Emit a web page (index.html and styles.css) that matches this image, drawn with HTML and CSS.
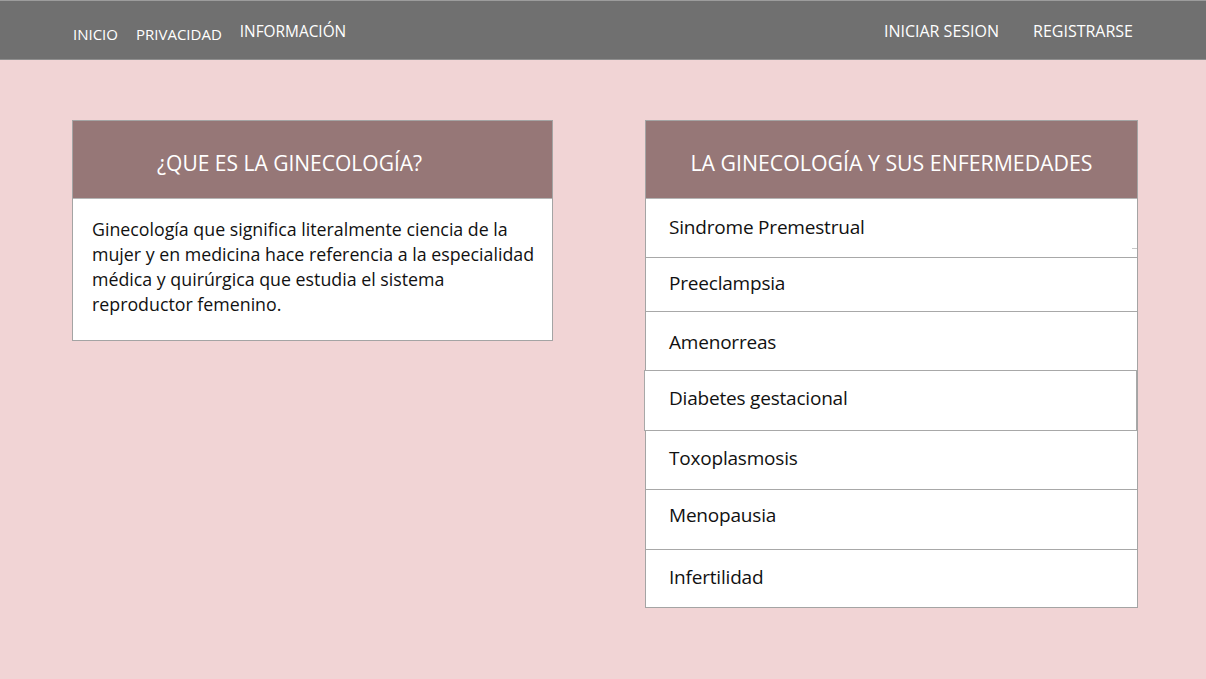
FILE: index.html
```html
<!DOCTYPE html>
<html lang="es">
<head>
<meta charset="utf-8">
<title>Ginecología</title>
<link rel="stylesheet" href="styles.css">
</head>
<body>
<header class="topbar">
  <nav class="nav-left">
    <a class="nav-link" href="#">INICIO</a>
    <a class="nav-link" href="#">PRIVACIDAD</a>
    <a class="nav-link raised" href="#">INFORMACIÓN</a>
  </nav>
  <nav class="nav-right">
    <a class="nav-link raised" href="#">INICIAR SESION</a>
    <a class="nav-link raised" href="#">REGISTRARSE</a>
  </nav>
</header>
<main class="content">
  <section class="card card-left">
    <h2 class="card-title title-left">¿QUE ES LA GINECOLOGÍA?</h2>
    <p class="card-text">Ginecología que significa literalmente ciencia de la mujer y en medicina hace referencia a la especialidad médica y quirúrgica que estudia el sistema reproductor femenino.</p>
  </section>
  <section class="card card-right">
    <h2 class="card-title title-right">LA GINECOLOGÍA Y SUS ENFERMEDADES</h2>
    <ul class="list">
      <li class="item with-tick">Sindrome Premestrual</li>
      <li class="item">Preeclampsia</li>
      <li class="item">Amenorreas</li>
      <li class="item shifted">Diabetes gestacional</li>
      <li class="item">Toxoplasmosis</li>
      <li class="item">Menopausia</li>
      <li class="item">Infertilidad</li>
    </ul>
  </section>
</main>
</body>
</html>
```
FILE: styles.css
```css
* { box-sizing: border-box; }
html, body { margin: 0; padding: 0; }
body {
  background: #f1d4d5;
  font-family: "Open Sans", "Noto Sans", sans-serif;
  color: #111;
  height: 679px;
  overflow: hidden;
}
.topbar {
  height: 60px;
  background: #707070;
  border-top: 1px solid #9c9c9c;
  border-bottom: 1px solid #8e8e8e;
  display: flex;
  justify-content: space-between;
  align-items: center;
  padding: 0 73px 0 73px;
}
.nav-left, .nav-right { display: flex; align-items: center; }
.nav-left { gap: 18px; }
.nav-right { gap: 34px; }
.nav-link {
  color: #fff;
  text-decoration: none;
  font-size: 15px;
  position: relative;
  top: 4px;
}
.nav-link.raised { top: 1px; font-size: 15.4px; }
.nav-right .nav-link { font-size: 16px; }
.content {
  display: flex;
  align-items: flex-start;
  padding: 60px 0 0 72px;
  gap: 92px;
}
.card {
  background: #fff;
  border: 1px solid #a4a4a4;
}
.card-left { width: 481px; }
.card-right { width: 493px; }
.card-title {
  margin: 0;
  height: 78px;
  padding-top: 5px;
  background: #967777;
  color: #fff;
  font-weight: 400;
  font-size: 21px;
  display: flex;
  align-items: center;
  border-bottom: 1px solid #b5b5b5;
}
.title-left { padding-left: 84px; padding-top: 7px; }
.title-right { justify-content: center; font-size: 21.3px; }
.card-text {
  margin: 0;
  padding: 18px 12px 23px 19px;
  font-size: 17.8px;
  line-height: 25px;
}
.list { list-style: none; margin: 0; padding: 0; }
.item {
  height: 59px;
  padding-left: 23px;
  display: flex;
  align-items: center;
  font-size: 19px;
  letter-spacing: -0.2px;
  border-top: 1px solid #a8a8a8;
}
.item:first-child { border-top: none; height: 58px; padding-bottom: 2px; }
.item:nth-child(2) { height: 54px; padding-bottom: 3px; }
.item:nth-child(3) { height: 59px; padding-top: 1px; }
.item:nth-child(5) { height: 58px; padding-bottom: 5px; }
.item:nth-child(6) { height: 60px; padding-bottom: 10px; }
.item:nth-child(7) { height: 58px; padding-bottom: 4px; }
.with-tick { position: relative; }
.with-tick::after {
  content: "";
  position: absolute;
  right: 0;
  top: 49px;
  width: 5px;
  height: 1px;
  background: #c8c8c8;
}
.item.shifted {
  position: relative;
  left: -2px;
  width: calc(100% + 2px);
  height: 61px;
  padding-left: 24px;
  padding-bottom: 6px;
  background: #fff;
  border: 1px solid #a8a8a8;
}
.item.shifted + .item { border-top: none; }
```
